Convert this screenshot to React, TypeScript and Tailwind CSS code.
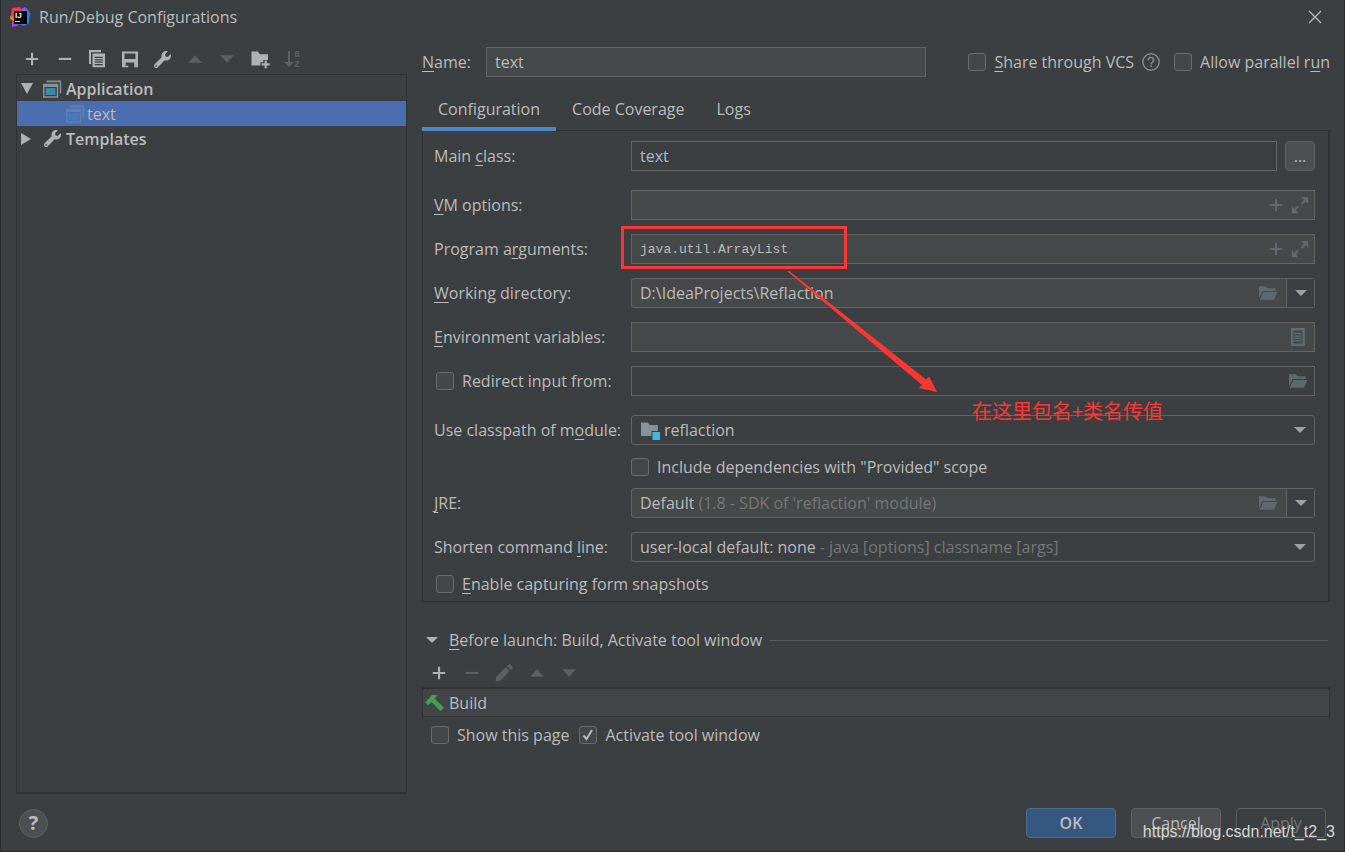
import type { InputHTMLAttributes, ReactNode } from "react";
import { FaWrench } from "react-icons/fa";

/* ── Icons (16 unit grid, drawn at 20px) ── */

function Icon({ children, className = "size-5" }: { children: ReactNode; className?: string }) {
  return (
    <svg viewBox="0 0 16 16" fill="currentColor" className={`shrink-0 ${className}`} aria-hidden="true">
      {children}
    </svg>
  );
}

const PlusIcon = () => <Icon><path d="M7.2 3h1.7v4.1H13v1.7H8.9V13H7.2V8.8H3V7.1h4.2z" /></Icon>;
const MinusIcon = () => <Icon><path d="M3 7.1h10v1.7H3z" /></Icon>;
const UpIcon = () => <Icon><path d="M8 5l5.5 6h-11z" /></Icon>;
const DownIcon = () => <Icon><path d="M8 11L2.500 5h11z" /></Icon>;

const CopyIcon = () => (
  <Icon>
    <path d="M1.600 .8h9.600v1.700H3.200v9.500H1.600z" />
    <path fillRule="evenodd" d="M4.400 3.600h10V14.500h-10zM6.200 6.200v1h6.400v-1zM6.200 8.100v1h6.400v-1zM6.200 10v1h6.400v-1zM6.200 11.900v1h6.400v-1z" />
  </Icon>
);

const SaveIcon = () => (
  <Icon>
    <path fillRule="evenodd" d="M1.600 2h12.800v12.500H1.600zM3.600 3.600v4.400h8.800V3.600zM4.600 10.800v2.500h2v1.200h4.800v-3.700z" />
  </Icon>
);

const FolderPlusIcon = () => (
  <Icon>
    <path d="M1.200 2h5l1.800 2.200h6.400v4.600h-3.800v1.800H8.300v2.600H1.200z" />
    <path d="M11.700 9.200h1.700v2.200h2.400v1.700h-2.400v2.300h-1.700v-2.300H9.300v-1.700h2.400z" />
  </Icon>
);

const SortIcon = () => (
  <>
    <svg viewBox="0 0 10 16" fill="currentColor" className="h-4 w-[10px] shrink-0" aria-hidden="true">
      <path d="M4 0h2v11h4l-5 5-5-5h4z" />
    </svg>
    <span className="flex flex-col font-['Liberation_Sans',sans-serif] text-[10px] leading-[10px] font-bold">
      <span>a</span>
      <span>z</span>
    </span>
  </>
);

const PencilIcon = () => (
  <Icon>
    <path d="M1.300 14.700l.4-3.700 7.700-7.600 3.200 3.200L5 14.200zM10.300 2.500l1.300-1.300c.4-.4 1-.4 1.400 0l1.800 1.800c.4.4.4 1 0 1.400l-1.300 1.300z" />
  </Icon>
);

const HammerIcon = () => (
  <Icon className="size-5 text-[#499c54]">
    <path d="M.2 7.600L5.500 1.500l4.700.2-2.500 2.600 7.500 7.400-2.700 2.900-7.300-7.400-2.600 2.500z" />
  </Icon>
);

const ExpandIcon = () => (
  <Icon>
    <path d="M9 1.500h5.500V7l-1.900-1.900-2.500 2.500-1.300-1.300 2.400-2.500zM1.500 9l1.900 1.900 2.500-2.500 1.300 1.300-2.500 2.500 2 2.300H1.500z" />
  </Icon>
);

const FolderIcon = () => (
  <Icon>
    <path d="M.8 2.500h5.300l1.500 1.700h6.600v2.100H3.700L.8 12.200z" />
    <path d="M4.300 7.200h11.200l-2.800 6.100H1.300z" />
  </Icon>
);

const ListIcon = () => (
  <Icon>
    <path fillRule="evenodd" d="M2.400.8h11.200v14.400H2.400zM4.400 2.800v10.400h7.200V2.800z" />
    <path d="M5.200 4.800h5.600v1H5.200zM5.200 6.700h5.600v1H5.200zM5.200 8.600h5.600v1H5.200zM5.200 10.500h5.600v1H5.200z" />
  </Icon>
);

const ModuleIcon = () => (
  <Icon className="size-5 text-[#87939a]">
    <path d="M.8 2h5.300l1.600 2h6.600v4.800H9.200V12.800H.8z" />
    <path fill="#40b6e0" d="M10 9.600h6V16h-6z" />
  </Icon>
);

function AppIcon({ dim }: { dim?: boolean }) {
  return (
    <Icon className={dim ? "size-5 text-[#5f7fb5]" : "size-5 text-[#87939a]"}>
      <path d="M3.600 1.200h11.800v10.200h-1.200V2.600H3.600z" />
      <path fillRule="evenodd" d="M.8 3.700h12.200V15H.8zM2 6.300v7.500h9.800V6.300z" />
      <path fill={dim ? "#4479bd" : "#3d8ba5"} d="M3 7.300h7.800v5.500H3z" />
    </Icon>
  );
}

function Logo() {
  return (
    <svg viewBox="0 0 20 20" className="size-5 shrink-0" aria-hidden="true">
      <path fill="#fe315d" d="M2 1l8-1 2 4-6 8-5-3z" />
      <path fill="#f97a12" d="M0 9l5 1v5l-5-3z" />
      <path fill="#7b5cf0" d="M11 2l4-2 4 4-1 8-7 3z" />
      <path fill="#2f7df6" d="M17 4l3 2-1 10-5 3-5-2z" />
      <path fill="#b03fd0" d="M2 14l9 2-4 3-5 1z" />
      <path fill="#000" d="M4 4h13v13H4z" />
      <text x="5" y="11" fontSize="8" fontWeight="700" fill="#fff" fontFamily="Liberation Sans, sans-serif">IJ</text>
      <path fill="#ccc" d="M5 14h5v1H5z" />
    </svg>
  );
}

/* ── Controls ── */

function Check({ children, ...props }: InputHTMLAttributes<HTMLInputElement>) {
  return (
    <label className="flex items-center gap-2 whitespace-nowrap">
      <span className="relative flex shrink-0">
        <input
          type="checkbox"
          className="peer size-[18px] appearance-none rounded-[3px] border border-[#6b6b6b] bg-[#43494a]"
          {...props}
        />
        <svg viewBox="0 0 18 18" className="pointer-events-none absolute inset-0 hidden size-[18px] peer-checked:block">
          <path d="M4.500 9.500l3 3.500 5.500-9" fill="none" stroke="#bbbbbb" strokeWidth="2" />
        </svg>
      </span>
      <span>{children}</span>
    </label>
  );
}

const Key = ({ children }: { children: string }) => (
  <span className="underline decoration-1 underline-offset-3 [text-decoration-skip-ink:none]">{children}</span>
);

const Row = ({ id, label, spaced, children }: { id: string; label: ReactNode; spaced?: boolean; children: ReactNode }) => (
  <div className={`flex h-[30px] items-center ${spaced ? "mt-[19px]" : "mt-[14px]"}`}>
    <label htmlFor={id} className="w-[197px] shrink-0 whitespace-nowrap">{label}</label>
    {children}
  </div>
);

const FIELD = "flex h-full min-w-0 flex-1 items-center border border-[#646464] pl-2";
const TEXT = "h-full min-w-0 flex-1 bg-transparent outline-none";
const SELECT = "h-full appearance-none bg-transparent outline-none";

const IconButton = ({ label, children }: { label: string; children: ReactNode }) => (
  <button aria-label={label} className="flex size-5 shrink-0 items-center justify-center text-[#5f696e]">{children}</button>
);

const DropArrow = ({ split }: { split?: boolean }) => (
  <button
    aria-label="Show options"
    className={`flex h-full w-7 shrink-0 items-center justify-center text-[#9fa2a4] ${split ? "border-l border-[#646464] bg-[#3c3f41]" : ""}`}
  >
    <svg viewBox="0 0 12 6" fill="currentColor" className="h-[6px] w-3"><path d="M0 0h12L6 6z" /></svg>
  </button>
);

const ToolButton = ({ label, disabled, children }: { label: string; disabled?: boolean; children: ReactNode }) => (
  <button aria-label={label} disabled={disabled} className="flex size-5 items-center justify-center text-[#afb1b3] disabled:text-[#5d5f60]">
    {children}
  </button>
);

/* ── Left side: toolbar + configuration tree ── */

function Sidebar() {
  return (
    <aside className="flex w-[391px] shrink-0 flex-col">
      <div className="mt-[10px] ml-[6px] flex h-[30px] w-[280px] items-center justify-between">
        <ToolButton label="Add"><PlusIcon /></ToolButton>
        <ToolButton label="Remove"><MinusIcon /></ToolButton>
        <ToolButton label="Copy"><CopyIcon /></ToolButton>
        <ToolButton label="Save"><SaveIcon /></ToolButton>
        <ToolButton label="Edit templates"><FaWrench className="size-[17px]" /></ToolButton>
        <ToolButton label="Move up" disabled><UpIcon /></ToolButton>
        <ToolButton label="Move down" disabled><DownIcon /></ToolButton>
        <ToolButton label="New folder"><FolderPlusIcon /></ToolButton>
        <ToolButton label="Sort" disabled><SortIcon /></ToolButton>
      </div>

      <ul className="flex-1 border border-b-2 border-[#323232] pt-px">
        <li className="flex h-[25px] items-center pl-[3px] font-semibold">
          <svg viewBox="0 0 14 12" className="mr-2 h-3 w-[14px] text-[#afb1b3]" fill="currentColor"><path d="M1 0h12L7 11z" /></svg>
          <AppIcon />
          <span className="ml-1">Application</span>
        </li>
        <li className="flex h-[25px] items-center bg-[#4b6eaf] pl-12">
          <AppIcon dim />
          <span className="ml-[2px]">text</span>
        </li>
        <li className="flex h-[25px] items-center pl-[3px] font-semibold">
          <svg viewBox="0 0 14 12" className="mr-2 h-3 w-[14px] text-[#afb1b3]" fill="currentColor"><path d="M1 0l10 6-10 6z" /></svg>
          <span className="flex size-5 items-center justify-center text-[#afb1b3]"><FaWrench className="size-[17px]" /></span>
          <span className="ml-1">Templates</span>
        </li>
      </ul>
    </aside>
  );
}

/* ── Configuration tab ── */

function ConfigurationPanel() {
  return (
    <section className="relative -mt-px border border-r-2 border-[#323232] pr-[13px] pb-[10px] pl-[11px]">
      <div className="mt-[10px] flex h-[30px] items-center">
        <label htmlFor="main" className="w-[197px] shrink-0">Main <Key>c</Key>lass:</label>
        <div className={FIELD}>
          <input id="main" defaultValue="text" className={`${TEXT} text-[#a9b7c6]`} />
        </div>
        <button className="ml-2 flex h-full w-[30px] items-center justify-center rounded border border-[#5e6060] bg-[#4c5052]">...</button>
      </div>

      <Row id="vm" spaced label={<><Key>V</Key>M options:</>}>
        <div className={`${FIELD} gap-1 bg-[#45494a] pr-1`}>
          <input id="vm" className={TEXT} />
          <IconButton label="Insert macro"><PlusIcon /></IconButton>
          <IconButton label="Expand"><ExpandIcon /></IconButton>
        </div>
      </Row>

      <Row id="args" label={<>Program a<Key>r</Key>guments:</>}>
        <div className={`${FIELD} gap-1 bg-[#45494a] pr-1`}>
          <input id="args" defaultValue="java.util.ArrayList" className={`${TEXT} font-['Liberation_Mono',monospace] text-[13px]`} />
          <IconButton label="Insert macro"><PlusIcon /></IconButton>
          <IconButton label="Expand"><ExpandIcon /></IconButton>
        </div>
      </Row>

      <Row id="dir" label={<><Key>W</Key>orking directory:</>}>
        <div className={`${FIELD} gap-2 rounded-[3px] bg-[#45494a]`}>
          <input id="dir" defaultValue="D:\IdeaProjects\Reflaction" className={TEXT} />
          <IconButton label="Browse"><FolderIcon /></IconButton>
          <DropArrow split />
        </div>
      </Row>

      <Row id="env" label={<><Key>E</Key>nvironment variables:</>}>
        <div className={`${FIELD} bg-[#45494a] pr-[6px]`}>
          <input id="env" className={TEXT} />
          <IconButton label="Edit variables"><ListIcon /></IconButton>
        </div>
      </Row>

      <div className="mt-[14px] flex h-[30px] items-center">
        <div className="w-[197px] shrink-0 pl-[2px]"><Check>Redirect input from:</Check></div>
        <div className={`${FIELD} pr-[6px]`}>
          <input aria-label="Redirect input from" className={TEXT} />
          <IconButton label="Browse"><FolderIcon /></IconButton>
        </div>
      </div>

      <Row id="module" spaced label={<>Use classpath of m<Key>o</Key>dule:</>}>
        <div className={`${FIELD} rounded-[3px]`}>
          <ModuleIcon />
          <select id="module" className={`${SELECT} ml-1 flex-1`}>
            <option>reflaction</option>
          </select>
          <DropArrow />
        </div>
      </Row>

      <div className="mt-[14px] ml-[197px] flex h-[15px] items-center">
        <Check>Include dependencies with "Provided" scope</Check>
      </div>

      <Row id="jre" label={<><Key>J</Key>RE:</>}>
        <div className={`${FIELD} gap-2 rounded-[3px] bg-[#45494a]`}>
          <div className="flex h-full flex-1 items-center gap-1">
            <select id="jre" className={`${SELECT} field-sizing-content`}>
              <option>Default</option>
            </select>
            <span className="text-[#777777]">(1.8 - SDK of 'reflaction' module)</span>
          </div>
          <IconButton label="Browse"><FolderIcon /></IconButton>
          <DropArrow split />
        </div>
      </Row>

      <Row id="shorten" label={<>Shorten command <Key>l</Key>ine:</>}>
        <div className={`${FIELD} rounded-[3px]`}>
          <div className="flex h-full flex-1 items-center gap-1">
            <select id="shorten" className={`${SELECT} field-sizing-content`}>
              <option>user-local default: none</option>
            </select>
            <span className="text-[#777777]">- java [options] classname [args]</span>
          </div>
          <DropArrow />
        </div>
      </Row>

      <div className="mt-[14px] flex h-[15px] items-center pl-[2px]">
        <Check><Key>E</Key>nable capturing form snapshots</Check>
      </div>

      {/* Red marker, arrow and note on top of the form */}
      <div className="pointer-events-none absolute top-[95px] left-[198px] h-[43px] w-[226px] border-3 border-[#fd3634]" />
      <svg viewBox="0 0 150 121" fill="#fd3634" className="pointer-events-none absolute top-[140px] left-[364px] h-[121px] w-[150px]">
        <path d="M0 0l1-1 138 109.500 3-3 8 15.500-18-4 3-3z" />
      </svg>
      <p className="pointer-events-none absolute top-[268px] left-[549px] font-['Noto_Sans_CJK_SC',sans-serif] text-[20px] leading-6 text-[#fd3634]">
        在这里包名+类名传值
      </p>
    </section>
  );
}

/* ── Before launch ── */

function BeforeLaunch() {
  return (
    <section>
      <div className="mt-7 flex h-5 items-center pr-[2px] pl-1">
        <svg viewBox="0 0 12 6" fill="#afb1b3" className="h-[6px] w-3"><path d="M0 0h12L6 6z" /></svg>
        <h2 className="ml-[11px] whitespace-nowrap"><Key>B</Key>efore launch: Build, Activate tool window</h2>
        <div className="ml-[7px] h-px flex-1 bg-[#55585a]" />
      </div>
      <div className="mt-2 ml-[7px] flex h-[29px] w-[150px] items-center justify-between">
        <ToolButton label="Add task"><PlusIcon /></ToolButton>
        <ToolButton label="Remove task" disabled><MinusIcon /></ToolButton>
        <ToolButton label="Edit task" disabled><PencilIcon /></ToolButton>
        <ToolButton label="Move up" disabled><UpIcon /></ToolButton>
        <ToolButton label="Move down" disabled><DownIcon /></ToolButton>
      </div>
      <ul className="border border-t-2 border-[#323232] bg-[#414547]">
        <li className="flex h-[27px] items-center gap-1 pl-[2px]"><HammerIcon />Build</li>
      </ul>
      <div className="mt-[9px] flex h-[18px] items-center gap-[10px] pl-[9px]">
        <Check>Show this page</Check>
        <Check defaultChecked>Activate tool window</Check>
      </div>
    </section>
  );
}

const TABS = ["Configuration", "Code Coverage", "Logs"];

export default function App() {
  return (
    <div className="relative flex min-h-screen flex-col border-x border-b border-[#2b2b2b] bg-[#3c3f41] font-['Open_Sans','Noto_Sans_CJK_SC',sans-serif] text-[16px] leading-5 text-[#bbbbbb]">
      <header className="flex h-[34px] items-center gap-[9px] pr-[22px] pl-[9px]">
        <Logo />
        <h1>Run/Debug Configurations</h1>
        <button aria-label="Close" className="ml-auto">
          <svg viewBox="0 0 14 14" className="size-[14px]" stroke="#bbbbbb" strokeWidth="1.300"><path d="M1 1l12 12M13 1L1 13" /></svg>
        </button>
      </header>

      <main className="flex flex-1 gap-[15px] pr-[14px] pl-[15px]">
        <Sidebar />

        <div className="min-w-0 flex-1">
          <div className="mt-[13px] flex h-[30px] items-center">
            <label htmlFor="name" className="w-16 shrink-0"><Key>N</Key>ame:</label>
            <input id="name" defaultValue="text" className="h-full min-w-0 flex-1 border border-[#646464] bg-[#45494a] px-2 outline-none" />
            <div className="ml-[42px] flex items-center">
              <Check><Key>S</Key>hare through VCS</Check>
              <svg viewBox="0 0 18 18" className="mr-[14px] ml-2 size-[18px]" aria-label="Help">
                <circle cx="9" cy="9" r="8.200" fill="none" stroke="#7f8b91" strokeWidth="1.400" />
                <path d="M6.400 7.300a2.600 2.600 0 1 1 4 2c-.9.600-1.300 1-1.300 1.900" fill="none" stroke="#7f8b91" strokeWidth="1.600" />
                <path d="M8.200 12.200h1.800v1.800H8.200z" fill="#7f8b91" />
              </svg>
              <Check>Allow parallel r<Key>u</Key>n</Check>
            </div>
          </div>

          <nav className="relative z-10 mt-[14px] flex h-10">
            {TABS.map((tab, i) => (
              <button key={tab} className={i === 0 ? "border-b-4 border-[#4a88c7] px-4" : "border-b-4 border-transparent px-4"}>
                {tab}
              </button>
            ))}
          </nav>
          <ConfigurationPanel />
          <BeforeLaunch />
        </div>
      </main>

      <footer className="flex items-center gap-[15px] px-[18px] pt-[14px] pb-[13px]">
        <button aria-label="Help" className="mr-auto flex size-[29px] items-center justify-center rounded-full border border-[#5e6060] bg-[#4c5052] text-[20px] font-bold">?</button>
        <button className="h-[30px] w-[90px] rounded border border-[#4c708c] bg-[#365880] font-semibold">OK</button>
        <button className="h-[30px] w-[90px] rounded border border-[#5e6060] bg-[#4c5052]">Cancel</button>
        <button disabled className="h-[30px] w-[90px] rounded border border-[#5e6060] text-[#777777]">Apply</button>
      </footer>

      <p className="pointer-events-none absolute right-[9px] bottom-[9px] font-['Liberation_Sans',sans-serif] text-[16px] text-[#d6d6d6]">
        https://blog.csdn.net/t_t2_3
      </p>
    </div>
  );
}
